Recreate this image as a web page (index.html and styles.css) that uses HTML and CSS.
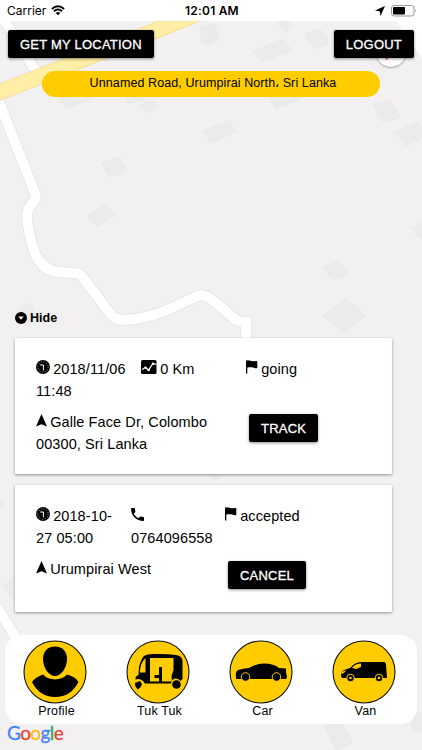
FILE: index.html
```html
<!DOCTYPE html>
<html lang="en">
<head>
    <meta charset="UTF-8">
    <meta name="viewport" content="width=device-width, initial-scale=1.0">
    <title>Taxi</title>
    <link rel="stylesheet" href="styles.css">
</head>
<body>
    <!-- icons used more than once -->
    <svg class="sprite">
        <symbol id="clock" viewBox="0 0 14 14">
            <circle cx="7" cy="7" r="7"/>
            <circle cx="7" cy="7" r="5.2" fill="none" stroke="#fff" stroke-width=".9" stroke-dasharray=".7 2.02"/>
            <path d="M4.200 5H7.400V10.400" fill="none" stroke="#fff" stroke-width="1"/>
        </symbol>
        <symbol id="arrow" viewBox="0 0 11 13">
            <path d="M5.5 0L11 12.6L5.5 10.2L0 12.6Z"/>
        </symbol>
        <symbol id="flag" viewBox="0 0 12 14">
            <path d="M0 .4H1.3C3.5 0 5 1.5 7 1.3L11.3 1V8C9 8.600 7.500 7.700 6 7.300C4.500 7 3 7.200 1.300 7.400V13.500H0Z"/>
        </symbol>
    </svg>

    <div class="screen">
        <svg class="map" viewBox="0 0 422 750">
            <g class="building">
                <path d="M254 51L283 39L292 50L262 62Z"/>
                <path d="M305 34L320 29L329 43L315 49Z"/>
                <path d="M278 23L288 21L292 28L285 32Z"/>
                <path d="M211 25L215 24L219 40L211 43Z"/>
                <path d="M200 28L211 25V44L202 43Z"/>
                <path d="M55 90L84 88L90 99L67 109Z"/>
                <path d="M124 96L140 93L144 99L128 104Z"/>
                <path d="M139 106L151 100L158 106L146 113Z"/>
                <path d="M267 94L294 88L301 99L276 109Z"/>
                <path d="M373 105L390 100L400 117L384 123Z"/>
                <path d="M395 132L416 122L427 133L407 146Z"/>
                <path d="M203 131L228 121L236 132L211 143Z"/>
                <path d="M102 163L120 157L127 171L110 177Z"/>
                <path d="M88 216L105 205L115 215L98 227Z"/>
                <path d="M412 228L424 222V240L419 238Z"/>
                <path d="M323 267L339 261L348 273L332 280Z"/>
                <path d="M323 316L345 298L366 316L344 333Z"/>
                <path d="M18 309L31 303L41 321L26 326Z"/>
                <path d="M3 586L20 573V602H16Z"/>
                <path d="M0 498L4 504L0 507Z"/>
                <path d="M205 473H225L216 481Z"/>
                <path d="M325 727L342 722L352 743L337 750Z"/>
                <path d="M411 729L416 712L424 715V733Z"/>
            </g>
            <g class="road-edge">
                <path d="M2 16L36 72"/>
                <path d="M-4 94L35 193Q37 197 34 201Q26 210 27 218Q29 235 33 247Q39 270 58 272L74 273Q80 273 84 279L109 312Q114 320 125 320Q149 319 176 306L195 297Q202 293 210 298L235 319Q239 322 246 322V345"/>
                <path d="M-4 606L24 650"/>
            </g>
            <g class="road">
                <path d="M2 16L36 72"/>
                <path d="M-4 94L35 193Q37 197 34 201Q26 210 27 218Q29 235 33 247Q39 270 58 272L74 273Q80 273 84 279L109 312Q114 320 125 320Q149 319 176 306L195 297Q202 293 210 298L235 319Q239 322 246 322V345"/>
                <path d="M-4 606L24 650"/>
            </g>
            <path class="highway-edge" d="M-10 96L230 1"/>
            <path class="highway" d="M-10 96L230 1"/>
            <path d="M396 21H422V58Z" fill="#fff"/>
        </svg>

        <header class="status-bar">
            <div class="carrier">
                <span>Carrier</span>
                <svg width="14" height="11" viewBox="0 0 14 11">
                    <path d="M.9 4Q7-1.500 13.100 4M3 6.300Q7 2.800 11 6.300" fill="none" stroke="#000" stroke-width="1.900"/>
                    <path d="M4.700 7.900Q7 6.100 9.300 7.900L7 10.300Z"/>
                </svg>
            </div>
            <div class="time">12:01 AM</div>
            <div class="battery">
                <svg width="10" height="10" viewBox="0 0 10 10"><path d="M10 0L5.500 10L4.700 5.300L0 4.600Z"/></svg>
                <svg width="26" height="12" viewBox="0 0 26 12">
                    <rect x=".5" y=".5" width="22.500" height="10.500" rx="2.500" fill="#fff" stroke="#999"/>
                    <rect x="2" y="2" width="12" height="7.500" rx="1"/>
                    <path d="M24.300 4Q25.800 5.800 24.300 7.600Z" fill="#888"/>
                </svg>
            </div>
        </header>

        <div class="compass"><svg width="8" height="5" viewBox="0 0 8 5"><path d="M0 0H6L1 4Z" fill="#d32f2f"/></svg></div>

        <div class="top-bar">
            <button class="btn">GET MY LOCATION</button>
            <button class="btn">LOGOUT</button>
        </div>
        <div class="address">Unnamed Road, Urumpirai North، Sri Lanka</div>

        <div class="hide">
            <svg width="12" height="12" viewBox="0 0 12 12"><circle cx="6" cy="6" r="6"/><path d="M3.300 4.600H8.700L6 7.800Z" fill="#fff"/></svg>
            <span>Hide</span>
        </div>

        <section class="card card-going">
            <div class="cell date"><svg class="icon-clock"><use href="#clock"/></svg> 2018/11/06<br>11:48</div>
            <div class="cell">
                <svg class="icon-chart" viewBox="0 0 16 14">
                    <rect width="15.500" height="14" rx="1.500"/>
                    <path d="M1 9.500L4.500 7.500L7.500 10.200L12 3.500L15.500 4.500" fill="none" stroke="#fff" stroke-width="1.200"/>
                    <circle cx="4.500" cy="7.600" r="1.200" fill="#fff"/><circle cx="7.700" cy="10" r="1.200" fill="#fff"/><circle cx="12" cy="3.700" r="1.200" fill="#fff"/>
                </svg> 0 Km
            </div>
            <div class="cell"><svg class="icon-flag"><use href="#flag"/></svg> going</div>
            <div class="cell place"><svg class="icon-arrow"><use href="#arrow"/></svg> Galle Face Dr, Colombo<br>00300, Sri Lanka</div>
            <div class="action"><button class="btn">TRACK</button></div>
        </section>

        <section class="card card-accepted">
            <div class="cell date"><svg class="icon-clock"><use href="#clock"/></svg> 2018-10-<br>27 05:00</div>
            <div class="cell">
                <svg class="icon-phone" viewBox="0 0 13 13"><path d="M0 .7Q0 0 .7 0H3.200Q3.900 0 3.900 .7Q4 2.300 4.400 3.300Q4.500 3.800 4.200 4.200L2.700 5.700Q4.200 8.800 7.300 10.300L8.800 8.800Q9.200 8.500 9.700 8.600Q10.700 9 12.300 9.100Q13 9.100 13 9.800V12.300Q13 13 12.300 13C5.500 13 0 7.500 0 .7Z"/></svg><br>0764096558
            </div>
            <div class="cell"><svg class="icon-flag"><use href="#flag"/></svg> accepted</div>
            <div class="cell place"><svg class="icon-arrow"><use href="#arrow"/></svg> Urumpirai West</div>
            <div class="action"><button class="btn">CANCEL</button></div>
        </section>

        <nav class="menu">
            <div class="menu-item">
                <svg class="badge" viewBox="0 0 64 64">
                    <circle class="disc" cx="32" cy="32" r="31"/>
                    <path d="M32 6.500C40 6.500 44 12 44 19C44 28 38 36 32 36C26 36 20 28 20 19C20 12 24 6.500 32 6.500Z"/>
                    <path d="M20 34.500C26 41 38 41 44 34.500C50 36 54 39 55.500 42C50 52 43 57 32 57C22 57 14 52 9 42C11 39 15 36 20 34.500Z"/>
                </svg>
                <span>Profile</span>
            </div>
            <div class="menu-item">
                <svg class="badge" viewBox="0 0 64 64">
                    <circle class="disc" cx="32" cy="32" r="31"/>
                    <path fill-rule="evenodd" d="M18 16Q21 14 27 14Q40 13.500 50 15Q56.500 16 56.500 21V39L54.500 41Q53 38.500 50 38.500Q46 38.500 45 43.500H19L17 41Q14 38 9.500 39.500Q9 36 12.500 35L13 27Q15 19 18 16ZM19.500 18Q14.500 22 13.800 32.500H19.500ZM24 18V41.500H46L45.500 36L47.500 30V18Z"/>
                    <path d="M28.500 35H33V27H36V42H33V38H28.500Z"/>
                    <path d="M9 43L14 41L16 44Q15 48 12 49.500Q9 47.500 9 43Z"/>
                    <circle cx="50.500" cy="44.500" r="4.300"/>
                </svg>
                <span>Tuk Tuk</span>
            </div>
            <div class="menu-item">
                <svg class="badge" viewBox="0 0 64 64">
                    <circle class="disc" cx="32" cy="32" r="31"/>
                    <path d="M7 36Q6 32 9 30Q14 28.500 20 28Q27 23.500 35 23.500Q45 23.500 50 28L57 28.500V32L58 37L57 39H7Z"/>
                    <circle class="arch" cx="16.500" cy="37" r="4.300"/>
                    <circle class="arch" cx="47.500" cy="37" r="4.300"/>
                </svg>
                <span>Car</span>
            </div>
            <div class="menu-item">
                <svg class="badge" viewBox="0 0 64 64">
                    <circle class="disc" cx="32" cy="32" r="31"/>
                    <path d="M9 36Q9 32 12 30L18 28Q23 22 29 22H52Q54 22 54 25L55 38H10Z"/>
                    <path d="M20 28Q23 23.500 29 23.500V27L24 29Z" fill="#fc0"/>
                    <path d="M10 32L14 30L13 32L10 34Z" fill="#fc0"/>
                    <circle class="arch" cx="18.500" cy="38" r="3.800"/>
                    <circle class="arch" cx="47" cy="38" r="3.800"/>
                    <circle cx="18.500" cy="38" r="1.300" fill="#fc0"/>
                    <circle cx="47" cy="38" r="1.300" fill="#fc0"/>
                </svg>
                <span>Van</span>
            </div>
        </nav>

        <div class="google"><span class="blue">G</span><span class="red">o</span><span class="yellow">o</span><span class="blue">g</span><span class="green">l</span><span class="red">e</span></div>
    </div>
</body>
</html>
```
FILE: styles.css
```css
* {
    box-sizing: border-box;
}
body {
    margin: 0;
    font-family: "Liberation Sans", Arial, sans-serif;
    color: #000;
}
.sprite {
    display: none;
}
.screen {
    position: relative;
    width: 422px;
    height: 750px;
    overflow: hidden;
    display: flex;
    flex-direction: column;
    isolation: isolate;
    background: #f2f0f1;
}

/* map behind everything */
.map {
    position: absolute;
    inset: 0;
    z-index: -2;
}
.building {
    fill: #ebebeb;
    stroke: #e5e6e6;
    stroke-width: .7;
}
.road, .road-edge, .highway, .highway-edge {
    fill: none;
    stroke: #fff;
    stroke-width: 10;
}
.road-edge {
    stroke: #e4e3e4;
    stroke-width: 11.6;
}
.highway {
    stroke: #ffeea5;
    stroke-width: 14.5;
}
.highway-edge {
    stroke: #f3db91;
    stroke-width: 16;
}

.status-bar {
    height: 21px;
    padding: 0 5px 0 7px;
    display: grid;
    grid-template-columns: 1fr auto 1fr;
    align-items: center;
    background: #fff;
    font-family: Inter, sans-serif;
    font-size: 12px;
}
.carrier {
    display: flex;
    align-items: center;
    gap: 5px;
}
.time {
    font-weight: 600;
    letter-spacing: .2px;
}
.battery {
    display: flex;
    justify-content: flex-end;
    align-items: center;
    gap: 6px;
}

.compass {
    position: absolute;
    left: 376px;
    top: 37px;
    z-index: -1;
    width: 30px;
    height: 30px;
    padding: 19px 0 0 9px;
    border-radius: 50%;
    background: #fff;
    box-shadow: 0 1px 2px rgba(0, 0, 0, .35);
    line-height: 0;
}
.top-bar {
    display: flex;
    justify-content: space-between;
    padding: 9px 8px 0;
}
.btn {
    height: 28px;
    padding: 0 12px;
    border: 0;
    border-radius: 2px;
    background: #000;
    color: #fff;
    font-family: inherit;
    font-size: 13px;
    letter-spacing: .22px;
    white-space: nowrap;
    -webkit-text-stroke: .3px #fff;
    box-shadow: 0 1px 3px rgba(0, 0, 0, .45);
}
.address {
    width: 338px;
    height: 26px;
    margin: 13px 0 0 42px;
    padding-left: 4px;
    border-radius: 13px;
    background: #fc0;
    font-size: 12.5px;
    line-height: 24px;
    letter-spacing: .1px;
    text-align: center;
}
.hide {
    display: flex;
    align-items: center;
    gap: 3px;
    height: 16px;
    margin: 213px 0 0 15px;
    font-size: 12.5px;
    font-weight: bold;
}

.card {
    display: grid;
    align-content: start;
    row-gap: 10px;
    width: 377px;
    margin-left: 15px;
    padding: 21px 20px 0 21px;
    background: #fff;
    border-radius: 1px;
    box-shadow: 0 1px 3px rgba(0, 0, 0, .4);
    font-size: 14.5px;
    line-height: 21.5px;
    letter-spacing: .1px;
}
.card-going {
    grid-template-columns: 105px 105px 1fr;
    height: 136px;
    margin-top: 12px;
}
.card-accepted {
    grid-template-columns: 95px 94px 1fr;
    height: 127px;
    margin-top: 11px;
}
.cell {
    white-space: nowrap;
}
.cell svg {
    margin-right: -1px;
}
.place {
    grid-column: span 2;
}
.action {
    padding: 2px 0 0 3px;
}
.icon-clock {
    width: 14px;
    height: 14px;
}
.icon-arrow {
    width: 11px;
    height: 13px;
}
.icon-flag {
    width: 12px;
    height: 14px;
}
.icon-chart {
    width: 16px;
    height: 14px;
}
.icon-phone {
    width: 13px;
    height: 13px;
}

.menu {
    display: grid;
    grid-template-columns: repeat(4, 1fr);
    width: 412px;
    height: 89px;
    margin: 23px 0 0 5px;
    padding-top: 5px;
    border-radius: 16px;
    background: #fff;
}
.menu-item {
    display: flex;
    flex-direction: column;
    align-items: center;
    font-size: 12.5px;
    line-height: 14px;
    letter-spacing: .15px;
}
.badge {
    width: 64px;
    height: 64px;
    margin-right: 3px;
}
.disc {
    fill: #fc0;
    stroke: #111;
    stroke-width: 1.1;
}
.arch {
    stroke: #fc0;
    stroke-width: 1;
}

.google {
    padding-left: 7px;
    font-family: Lato, sans-serif;
    font-size: 19px;
    line-height: 18px;
    letter-spacing: -.6px;
    -webkit-text-stroke: .3px;
}
.blue { color: #4285f4; }
.red { color: #ea4335; }
.yellow { color: #fbbc05; }
.green { color: #34a853; }
```
